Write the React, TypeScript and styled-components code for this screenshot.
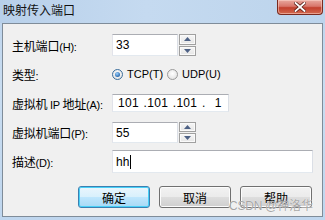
import React, { useState } from "react";
import styled, { createGlobalStyle } from "styled-components";

const GlobalStyle = createGlobalStyle`
  html, body {
    margin: 0;
    padding: 0;
    background: #c4d9ef;
  }
`;

const cjk = `"Noto Sans CJK SC", "Liberation Sans", sans-serif`;
const latin = `"Liberation Sans", "Noto Sans CJK SC", sans-serif`;

const Frame = styled.div`
  position: relative;
  width: 325px;
  height: 220px;
  display: flex;
  flex-direction: column;
  background: linear-gradient(180deg, #bcd3ec 0%, #c9ddf1 40%, #bfd6ee 100%);
  font-family: ${cjk};
  overflow: hidden;
`;

const TitleBar = styled.div`
  height: 23px;
  display: flex;
  align-items: flex-start;
  padding-left: 3px;
  background: linear-gradient(90deg, #b8d0ea 0%, #c5daf0 45%, #bcd4ec 100%);
`;

const Title = styled.div`
  margin-top: 3px;
  font-size: 12px;
  line-height: 14px;
  color: #111;
`;

const CloseButton = styled.div`
  margin-left: auto;
  margin-right: 2px;
  width: 46px;
  height: 15px;
  box-sizing: border-box;
  border: 1px solid #7a2a1f;
  border-top: none;
  border-radius: 0 0 4px 4px;
  background: linear-gradient(180deg, #e8a99f 0%, #d8766a 45%, #c2402e 55%, #d36a4f 100%);
  box-shadow: inset 0 0 0 1px rgba(255, 220, 210, 0.5);
  display: flex;
  align-items: center;
  justify-content: center;
`;

const Client = styled.div`
  margin: 0 2px 0 2px;
  height: 194px;
  box-sizing: border-box;
  border: 1px solid #7f8c99;
  background: #f0f0f0;
  display: flex;
  flex-direction: column;
  padding: 0 10px 0 9px;
`;

const Row = styled.div<{ $h: number; $mt: number }>`
  display: grid;
  grid-template-columns: 100px 1fr;
  align-items: center;
  height: ${(p) => p.$h}px;
  margin-top: ${(p) => p.$mt}px;
`;

const Label = styled.div`
  font-size: 12px;
  color: #000;
  white-space: nowrap;
  letter-spacing: -0.2px;
  span {
    font-family: ${latin};
    font-size: 11px;
  }
`;

const Field = styled.div<{ $w: number }>`
  width: ${(p) => p.$w}px;
  height: 100%;
  display: flex;
  align-items: stretch;
`;

const TextBox = styled.div`
  flex: 1;
  box-sizing: border-box;
  border: 1px solid #abadb3;
  border-left-color: #e2e3ea;
  border-right-color: #dbdfe6;
  border-bottom-color: #e3e9ef;
  background: #fff;
  display: flex;
  align-items: center;
  padding-left: 3px;
  font-family: ${latin};
  font-size: 12px;
  color: #000;
`;

const Caret = styled.span`
  display: inline-block;
  width: 1px;
  height: 14px;
  background: #000;
  margin-left: 1px;
`;

const Spinner = styled.div`
  width: 17px;
  margin-left: 1px;
  display: flex;
  flex-direction: column;
  gap: 1px;
`;

const SpinButton = styled.div`
  flex: 1;
  box-sizing: border-box;
  border: 1px solid #a0a0a0;
  background: linear-gradient(180deg, #f6f6f6 0%, #e6e6e6 100%);
  box-shadow: inset 0 0 0 1px #fafafa;
  display: flex;
  align-items: center;
  justify-content: center;
`;

const Radios = styled.div`
  display: flex;
  align-items: center;
`;

const RadioItem = styled.label`
  display: flex;
  align-items: center;
  margin-right: 4px;
  font-family: ${latin};
  font-size: 11px;
  color: #000;
`;

const RadioDot = styled.span<{ $on: boolean }>`
  width: 11px;
  height: 11px;
  box-sizing: border-box;
  border-radius: 50%;
  border: 1px solid ${(p) => (p.$on ? "#3c6e9c" : "#9a9a9a")};
  background: radial-gradient(circle at 50% 40%, #ffffff 0%, #dcdcdc 100%);
  display: flex;
  align-items: center;
  justify-content: center;
  margin-right: 4px;
  &::after {
    content: "";
    display: ${(p) => (p.$on ? "block" : "none")};
    width: 5px;
    height: 5px;
    border-radius: 50%;
    background: radial-gradient(circle at 40% 35%, #9fd3ff 0%, #2a6bb0 70%, #164b84 100%);
  }
`;

const IpText = styled.span`
  letter-spacing: 0.3px;
  word-spacing: 1px;
  white-space: pre;
  padding-left: 2px;
`;

const ButtonRow = styled.div`
  display: flex;
  justify-content: flex-end;
  gap: 9px;
  margin-top: 13px;
  height: 22px;
`;

const Button = styled.div<{ $focus?: boolean }>`
  width: 72px;
  box-sizing: border-box;
  border: 1px solid ${(p) => (p.$focus ? "#3c7fb1" : "#707070")};
  border-radius: 3px;
  background: ${(p) =>
    p.$focus
      ? "linear-gradient(180deg, #eaf6fd 0%, #d9f0fc 48%, #bee6fd 52%, #a7d9f5 100%)"
      : "linear-gradient(180deg, #f2f2f2 0%, #ebebeb 48%, #dddddd 52%, #cfcfcf 100%)"};
  box-shadow: ${(p) =>
    p.$focus ? "inset 0 0 0 1px #48d0f7" : "inset 0 0 0 1px #fcfcfc"};
  display: flex;
  align-items: center;
  justify-content: center;
  font-size: 12px;
  color: #000;
`;

const Watermark = styled.div`
  position: absolute;
  left: 229px;
  top: 196px;
  font-family: ${latin};
  font-size: 12px;
  color: rgba(150, 150, 150, 0.85);
  text-shadow: 0 0 1px #fff;
  letter-spacing: -0.2px;
  span {
    font-family: ${cjk};
  }
`;

const Arrow = ({ up }: { up: boolean }) => (
  <svg width="7" height="4" viewBox="0 0 7 4">
    <path d={up ? "M0 4 L3.5 0 L7 4 Z" : "M0 0 L3.5 4 L7 0 Z"} fill="#4d6185" />
  </svg>
);

const SpinField = ({ value }: { value: string }) => (
  <Field $w={84}>
    <TextBox>{value}</TextBox>
    <Spinner>
      <SpinButton>
        <Arrow up />
      </SpinButton>
      <SpinButton>
        <Arrow up={false} />
      </SpinButton>
    </Spinner>
  </Field>
);

function App() {
  const [proto] = useState("tcp");

  return (
    <Frame>
      <GlobalStyle />
      <TitleBar>
        <Title>映射传入端口</Title>
        <CloseButton>
          <svg width="12" height="10" viewBox="0 0 12 10">
            <path
              d="M1.5 1 L10.5 9 M10.5 1 L1.5 9"
              stroke="#5a2018"
              strokeWidth="3.4"
              strokeLinecap="square"
            />
            <path
              d="M1.5 1 L10.5 9 M10.5 1 L1.5 9"
              stroke="#ffffff"
              strokeWidth="1.8"
              strokeLinecap="square"
            />
          </svg>
        </CloseButton>
      </TitleBar>
      <Client>
        <Row $h={22} $mt={10}>
          <Label>
            主机端口<span>(H):</span>
          </Label>
          <SpinField value="33" />
        </Row>
        <Row $h={20} $mt={8}>
          <Label>
            类型<span>:</span>
          </Label>
          <Radios>
            <RadioItem>
              <RadioDot $on={proto === "tcp"} />
              TCP(T)
            </RadioItem>
            <RadioItem>
              <RadioDot $on={proto === "udp"} />
              UDP(U)
            </RadioItem>
          </Radios>
        </Row>
        <Row $h={18} $mt={10}>
          <Label>
            虚拟机 <span>IP</span> 地址<span>(A):</span>
          </Label>
          <Field $w={117}>
            <TextBox>
              <IpText>101 .101 .101 .  1</IpText>
            </TextBox>
          </Field>
        </Row>
        <Row $h={21} $mt={10}>
          <Label>
            虚拟机端口<span>(P):</span>
          </Label>
          <SpinField value="55" />
        </Row>
        <Row $h={23} $mt={7}>
          <Label>
            描述<span>(D):</span>
          </Label>
          <Field $w={201}>
            <TextBox>
              hh
              <Caret />
            </TextBox>
          </Field>
        </Row>
        <ButtonRow>
          <Button $focus>确定</Button>
          <Button>取消</Button>
          <Button>帮助</Button>
        </ButtonRow>
      </Client>
      <Watermark>
        CSDN @<span>神洛华</span>
      </Watermark>
    </Frame>
  );
}

export default App;
